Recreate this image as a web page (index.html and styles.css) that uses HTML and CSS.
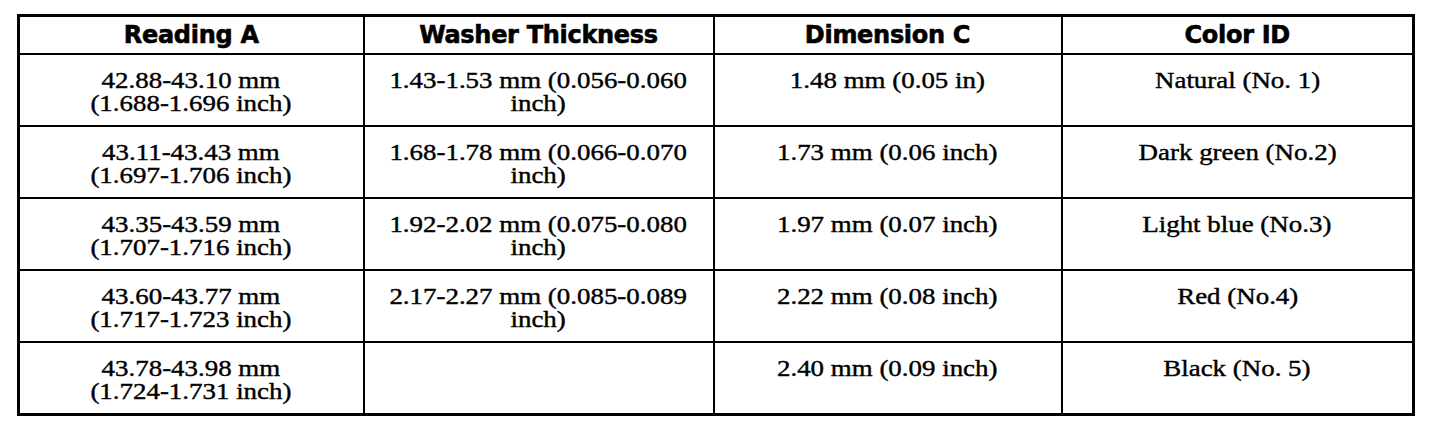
FILE: index.html
```html
<!DOCTYPE html>
<html lang="en">
  <head>
    <meta charset="UTF-8" />
    <meta name="viewport" content="width=device-width, initial-scale=1.0" />
    <title>Washer selection</title>
    <link rel="stylesheet" href="styles.css">
  </head>
  <body>
    <table class="spec-table">
      <colgroup>
        <col class="col-a">
        <col class="col-b">
        <col class="col-c">
        <col class="col-d">
      </colgroup>
      <tr class="head-row">
        <th>Reading A</th>
        <th>Washer Thickness</th>
        <th>Dimension C</th>
        <th>Color ID</th>
      </tr>
      <tr>
        <td><span class="cell-text">42.88-43.10 mm<br>(1.688-1.696 inch)</span></td>
        <td><span class="cell-text">1.43-1.53 mm (0.056-0.060<br>inch)</span></td>
        <td><span class="cell-text">1.48 mm (0.05 in)</span></td>
        <td><span class="cell-text">Natural (No. 1)</span></td>
      </tr>
      <tr>
        <td><span class="cell-text">43.11-43.43 mm<br>(1.697-1.706 inch)</span></td>
        <td><span class="cell-text">1.68-1.78 mm (0.066-0.070<br>inch)</span></td>
        <td><span class="cell-text">1.73 mm (0.06 inch)</span></td>
        <td><span class="cell-text">Dark green (No.2)</span></td>
      </tr>
      <tr>
        <td><span class="cell-text">43.35-43.59 mm<br>(1.707-1.716 inch)</span></td>
        <td><span class="cell-text">1.92-2.02 mm (0.075-0.080<br>inch)</span></td>
        <td><span class="cell-text">1.97 mm (0.07 inch)</span></td>
        <td><span class="cell-text">Light blue (No.3)</span></td>
      </tr>
      <tr>
        <td><span class="cell-text">43.60-43.77 mm<br>(1.717-1.723 inch)</span></td>
        <td><span class="cell-text">2.17-2.27 mm (0.085-0.089<br>inch)</span></td>
        <td><span class="cell-text">2.22 mm (0.08 inch)</span></td>
        <td><span class="cell-text">Red (No.4)</span></td>
      </tr>
      <tr>
        <td><span class="cell-text">43.78-43.98 mm<br>(1.724-1.731 inch)</span></td>
        <td></td>
        <td><span class="cell-text">2.40 mm (0.09 inch)</span></td>
        <td><span class="cell-text">Black (No. 5)</span></td>
      </tr>
    </table>
  </body>
</html>
```

FILE: styles.css
```css
body{
  margin: 0;
  padding: 14px 0 0 17px;
  background-color: white;
  color: black;
}
.spec-table{
  border-collapse: collapse;
  width: 1395px;
  table-layout: fixed;
  border: 3px solid black;
}
.col-a{ width: 345px; }
.col-b{ width: 350px; }
.col-c{ width: 348px; }
.col-d{ width: 352px; }

.spec-table th,
.spec-table td{
  border: 2px solid black;
  text-align: center;
  padding: 0;
}
.head-row th{
  height: 36px;
  font-family: "DejaVu Sans", sans-serif;
  font-weight: bold;
  font-size: 24px;
  letter-spacing: -0.3px;
  -webkit-text-stroke: 0.6px black;
  vertical-align: middle;
}
.spec-table td{
  height: 72px;
  vertical-align: top;
  padding-top: 14px;
  box-sizing: border-box;
  font-family: "Liberation Serif", serif;
  font-size: 23px;
  line-height: 23px;
}
.cell-text{
  display: inline-block;
  transform: scaleX(1.17);
  -webkit-text-stroke: 0.4px black;
}
```
